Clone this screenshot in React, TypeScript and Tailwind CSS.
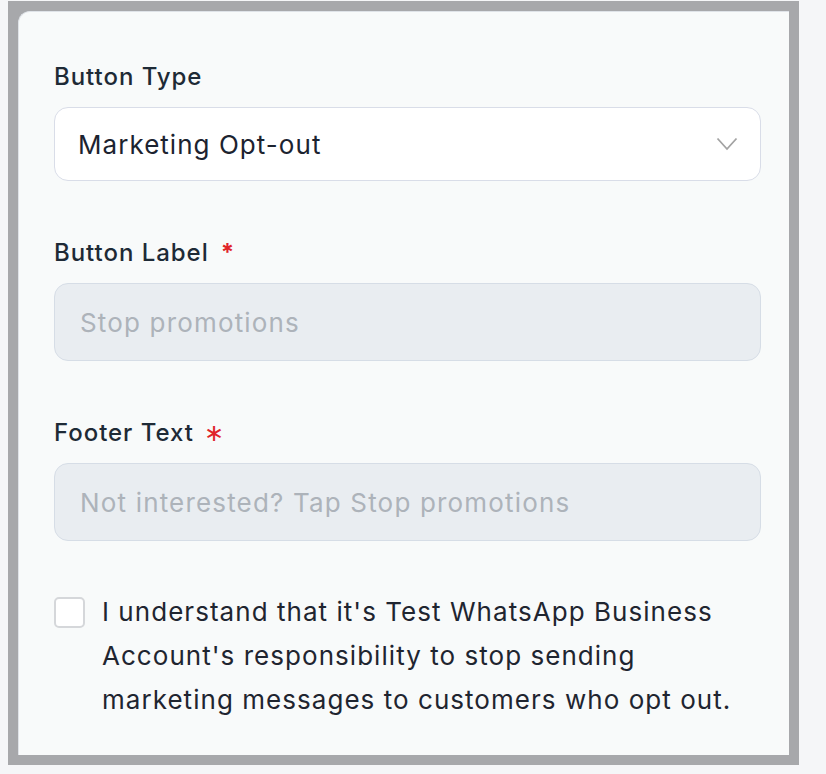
export default function App() {
  return (
    <div
      className="min-h-screen bg-[#f5f6f8] pl-[8px] pt-[1px]"
      style={{ fontFamily: "Inter, 'Noto Sans', sans-serif" }}
    >
      <div className="w-[791px] border-[10px] border-[#a7a8ab] bg-[#a7a8ab]">
        <div className="h-[744px] rounded-tl-xl border-l border-t border-[#dfe3e8] bg-[#f8fafa] pl-[35px] pr-[28px] pt-[49px]">
          {/* Button Type */}
          <label className="block text-[24px] font-medium leading-[32px] tracking-[0.04em] text-[#1e2a36]">
            Button Type
          </label>
          <div className="mt-[14px] flex h-[74px] items-center justify-between rounded-[14px] border border-[#d9dde8] bg-white pl-[23px] pr-[22px]">
            <span className="text-[26px] tracking-[0.04em] text-[#1c2330]">Marketing Opt-out</span>
            <svg width="22" height="14" viewBox="0 0 22 14" fill="none">
              <path d="M1.5 1.5 L11 12 L20.5 1.5" stroke="#a3a3a3" strokeWidth="1.8" />
            </svg>
          </div>

          {/* Button Label */}
          <label className="mt-[56px] flex items-center text-[24px] font-medium leading-[32px] tracking-[0.04em] text-[#1e2a36]">
            Button Label
            <span className="ml-[12px] text-[24px] font-bold text-[#e0242a]">*</span>
          </label>
          <div className="mt-[14px] flex h-[78px] items-center rounded-[14px] border border-[#d6dde6] bg-[#e9edf1] px-[25px]">
            <span className="text-[26px] tracking-[0.045em] text-[#adb3ba]">Stop promotions</span>
          </div>

          {/* Footer Text */}
          <label className="mt-[56px] flex items-center text-[24px] font-medium leading-[32px] tracking-[0.04em] text-[#1e2a36]">
            Footer Text
            <span className="ml-[10px] text-[24px] text-[#e0242a]">∗</span>
          </label>
          <div className="mt-[14px] flex h-[78px] items-center rounded-[14px] border border-[#d6dde6] bg-[#e9edf1] px-[25px]">
            <span className="text-[26px] tracking-[0.045em] text-[#adb3ba]">Not interested? Tap Stop promotions</span>
          </div>

          {/* Consent */}
          <div className="mt-[49px] flex items-start gap-[17px]">
            <div className="mt-[7px] h-[31px] w-[31px] shrink-0 rounded-[5px] border-2 border-[#d5d7da] bg-white" />
            <p className="w-[650px] text-[26px] leading-[44px] tracking-[0.04em] text-[#1f2530]">
              I understand that it's Test WhatsApp Business Account's responsibility to stop sending marketing messages to customers who opt out.
            </p>
          </div>
        </div>
      </div>
    </div>
  );
}
